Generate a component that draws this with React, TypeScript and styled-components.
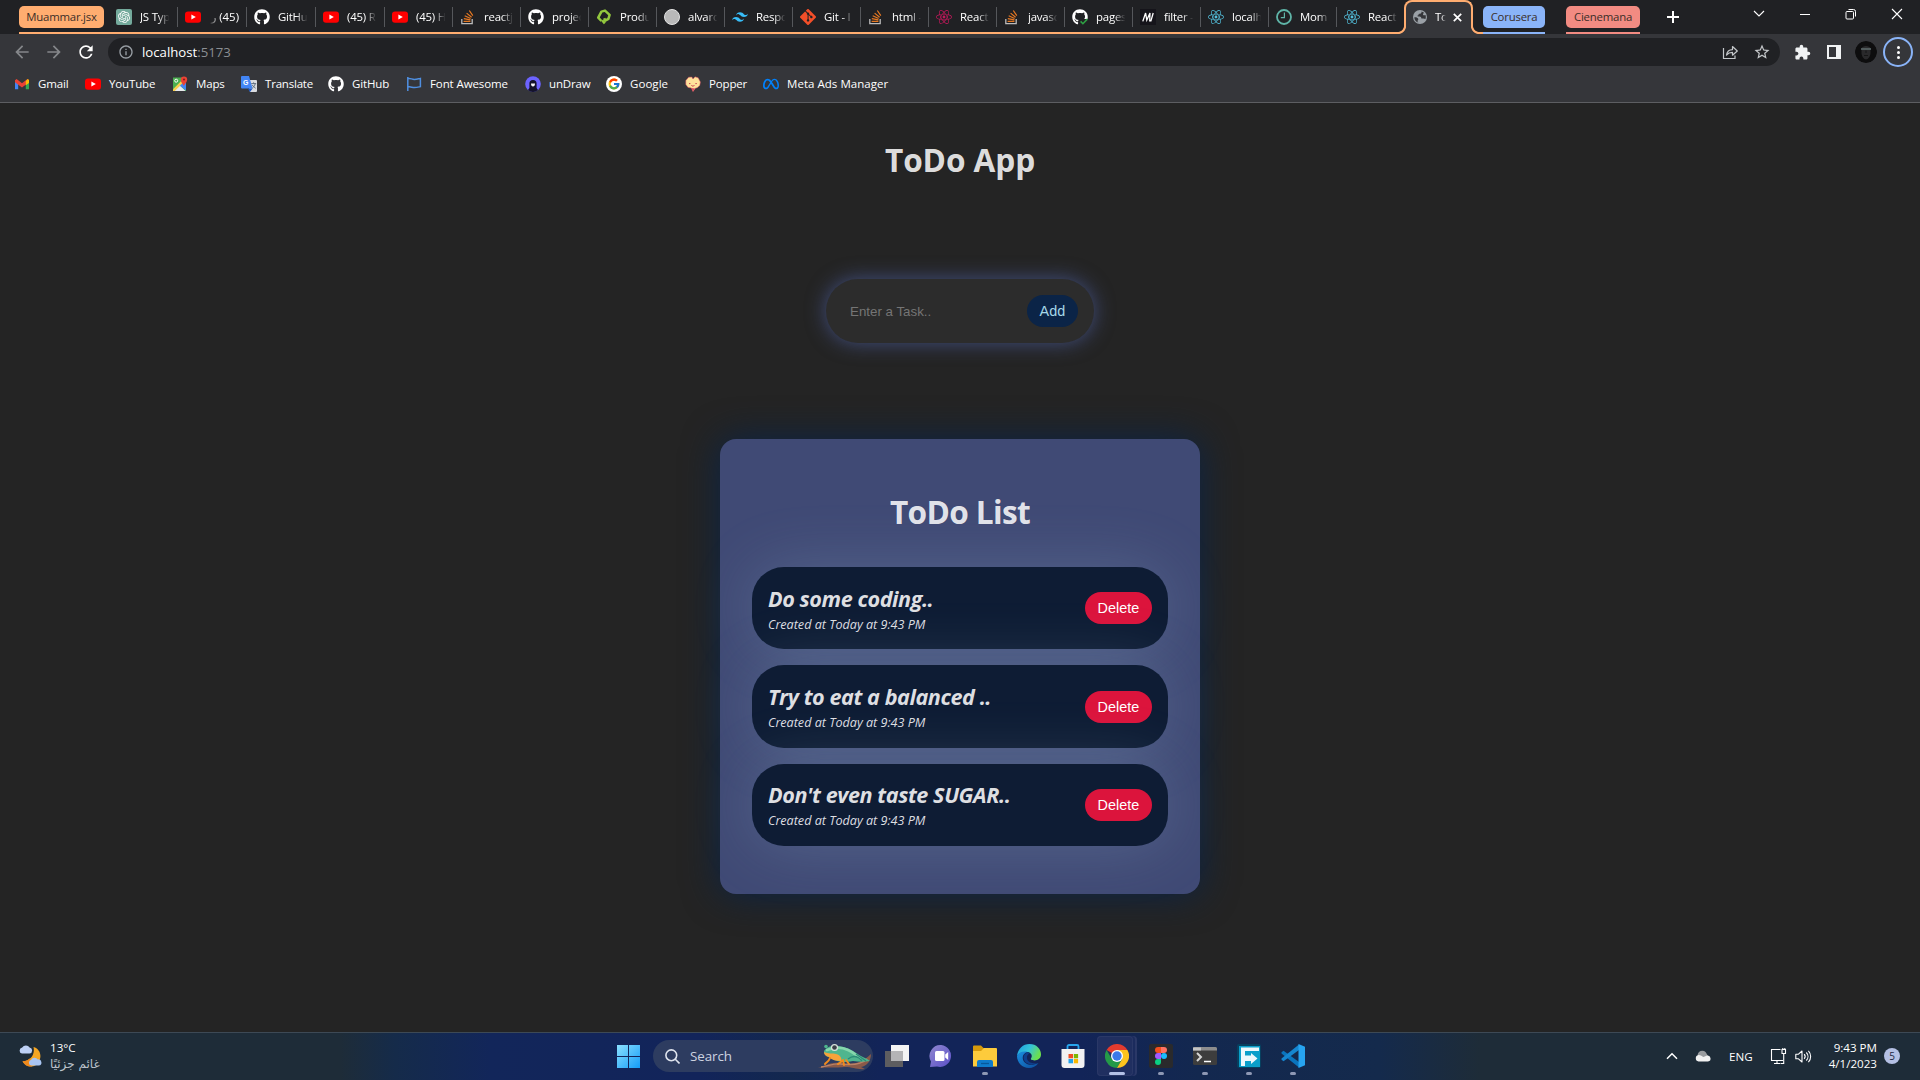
import React from 'react';
import styled, { createGlobalStyle, css } from 'styled-components';
import { FaGithub, FaReact } from 'react-icons/fa';
import { SiOpenai, SiTailwindcss, SiGit, SiMeta } from 'react-icons/si';
import { FcGoogle } from 'react-icons/fc';
import {
  MdArrowBack,
  MdArrowForward,
  MdRefresh,
  MdExtension,
  MdStarBorder,
  MdOutlineInfo,
} from 'react-icons/md';

const ui = `'Segoe UI', 'Open Sans', 'Noto Sans', sans-serif`;
const arial = `'Liberation Sans', Arial, sans-serif`;

const GlobalStyle = createGlobalStyle`
  *, *::before, *::after { box-sizing: border-box; }
  body { margin: 0; background: #242424; font-family: ${ui}; overflow: hidden; }
  svg { display: block; flex: none; }
`;

const Screen = styled.div`
  width: 1920px;
  height: 1080px;
  display: flex;
  flex-direction: column;
  background: #242424;
`;

/* ---------- tab strip ---------- */

const TabStrip = styled.div`
  height: 34px;
  display: flex;
  background: #202124;
  padding-left: 19px;
`;

const GroupedTabs = styled.div`
  display: flex;
  height: 34px;
  width: 1379px;
  border-bottom: 2px solid #ffad70;
`;

const Chip = styled.div<{ $w: number; $bg: string }>`
  width: ${(p) => p.$w}px;
  height: 22px;
  margin-top: 6px;
  flex: none;
  border-radius: 5px;
  background: ${(p) => p.$bg};
  color: #3a2e28;
  font-size: 11.4px;
  letter-spacing: -0.22px;
  line-height: 21px;
  text-align: center;
  white-space: nowrap;
`;

const ChipGroup = styled.div<{ $line: string; $gap: number }>`
  height: 34px;
  margin-right: ${(p) => p.$gap}px;
  border-bottom: 2px solid ${(p) => p.$line};
`;

const TabList = styled.div`
  display: flex;
  margin-left: 5px;
  height: 32px;
`;

const TabBox = styled.div<{ $w: number; $last?: boolean }>`
  width: ${(p) => p.$w}px;
  flex: none;
  height: 20px;
  margin-top: 7px;
  padding-left: 7px;
  display: flex;
  align-items: center;
  gap: 8px;
  border-right: 1px solid ${(p) => (p.$last ? 'transparent' : '#55575b')};
`;

const IconSlot = styled.span`
  width: 16px;
  height: 16px;
  flex: none;
  display: flex;
  align-items: center;
  justify-content: center;
`;

const TabLabel = styled.span<{ $w?: number; $rtl?: boolean }>`
  width: ${(p) => p.$w ?? 30}px;
  flex: none;
  overflow: hidden;
  white-space: nowrap;
  color: #fff;
  font-size: 11.4px;
  line-height: 18px;
  letter-spacing: -0.2px;
  ${(p) =>
    p.$rtl
      ? css`
          direction: rtl;
          mask-image: linear-gradient(to left, #000 65%, transparent);
        `
      : css`
          mask-image: linear-gradient(to right, #000 60%, transparent 98%);
        `}
`;

const ActiveTab = styled.div`
  position: relative;
  width: 69px;
  height: 34px;
  margin-left: 6px;
  flex: none;
  display: flex;
  align-items: center;
  gap: 7px;
  padding-left: 8px;
  background: #35363a;
  border-radius: 8px 8px 0 0;

  &::before {
    content: '';
    position: absolute;
    inset: 0 0 8px 0;
    border: 2px solid #ffad70;
    border-bottom: 0;
    border-radius: 8px 8px 0 0;
  }
`;

const Flare = styled.span<{ $side: 'left' | 'right' }>`
  position: absolute;
  bottom: 0;
  width: 8px;
  height: 8px;
  ${(p) =>
    p.$side === 'left'
      ? css`
          left: -6px;
          background: radial-gradient(circle at 0 0, #202124 5.5px, #ffad70 6.2px 7.6px, #35363a 8.4px);
        `
      : css`
          right: -6px;
          background: radial-gradient(circle at 100% 0, #202124 5.5px, #ffad70 6.2px 7.6px, #35363a 8.4px);
        `}
`;

const GroupTail = styled.div`
  width: 4px;
  margin-left: 6px;
  height: 34px;
  border-bottom: 2px solid #ffad70;
`;

const WindowButtons = styled.div`
  display: flex;
  margin-left: auto;
  padding-right: 12px;
  align-items: center;
  height: 28px;
  gap: 24px;
`;

const NewTab = styled.div`
  display: flex;
  align-items: center;
  height: 34px;
  margin-left: 5px;
`;

/* ---------- toolbar ---------- */

const Toolbar = styled.div`
  height: 36px;
  display: flex;
  align-items: center;
  background: #35363a;
  padding: 0 6px 0 12px;
`;

const NavButtons = styled.div`
  display: flex;
  gap: 12px;
  width: 96px;
  color: #85878a;
`;

const Omnibox = styled.div`
  width: 1672px;
  height: 28px;
  flex: none;
  display: flex;
  align-items: center;
  border-radius: 14px;
  background: #202124;
  padding: 0 9px 0 10px;
  color: #9aa0a6;
`;

const Url = styled.span`
  margin-left: 8px;
  flex: 1;
  font-size: 13.2px;
  line-height: 20px;
  color: #8b8f93;

  b {
    font-weight: 400;
    color: #fff;
  }
`;

const OmniActions = styled.span`
  display: flex;
  align-items: center;
  gap: 15px;
  color: #c4c7ca;
`;

const ToolbarActions = styled.div`
  display: flex;
  align-items: center;
  padding-left: 14px;
  color: #f1f3f4;
`;

const SidePanelGlyph = styled.span`
  width: 14px;
  height: 14px;
  margin-left: 16px;
  border: 2px solid #f1f3f4;
  border-right-width: 5px;
`;

const Avatar = styled.span`
  width: 22px;
  height: 22px;
  margin-left: 14px;
  border-radius: 50%;
  overflow: hidden;
`;

const MenuButton = styled.span`
  width: 30px;
  height: 30px;
  margin-left: 6px;
  border-radius: 50%;
  border: 2px solid #8ab4f8;
  display: flex;
  flex-direction: column;
  align-items: center;
  justify-content: center;
  gap: 2px;

  i {
    width: 3px;
    height: 3px;
    border-radius: 50%;
    background: #fff;
  }
`;

/* ---------- bookmarks ---------- */

const BookmarksBar = styled.div`
  height: 33px;
  display: flex;
  align-items: center;
  padding: 0 14px 5px;
  background: #35363a;
  border-bottom: 1px solid #5d5e62;
`;

const BookmarkItem = styled.div<{ $w: number; $ls?: number }>`
  width: ${(p) => p.$w}px;
  flex: none;
  display: flex;
  align-items: center;
  gap: 8px;
  color: #fff;
  font-size: 11.5px;
  line-height: 16px;
  letter-spacing: ${(p) => p.$ls ?? -0.15}px;
  white-space: nowrap;
`;

/* ---------- page ---------- */

const Page = styled.main`
  height: 929px;
  display: flex;
  flex-direction: column;
  align-items: center;
  background: #242424;
  color: rgba(255, 255, 255, 0.87);
`;

const Heading = styled.h1<{ $mt: number; $ls: number }>`
  margin: ${(p) => p.$mt}px 0 0;
  font-size: 31.6px;
  line-height: 44px;
  font-weight: 700;
  letter-spacing: ${(p) => p.$ls}px;
  text-align: center;
`;

const TaskForm = styled.form`
  width: 268px;
  height: 64px;
  margin-top: 97px;
  padding: 16px 16px 16px 24px;
  display: flex;
  align-items: center;
  justify-content: space-between;
  border-radius: 32px;
  background: #2c2c2c;
  box-shadow: 0 0 20px rgba(87, 108, 188, 0.6);
`;

const TaskInput = styled.input`
  width: 150px;
  padding: 0;
  border: 0;
  outline: 0;
  background: transparent;
  font: 13.333px ${arial};
  color: #ddd;

  &::placeholder {
    color: #757575;
  }
`;

const PillButton = styled.button<{ $bg: string; $fg: string }>`
  height: 32px;
  padding: 0 12.8px;
  flex: none;
  border: 0;
  border-radius: 16px;
  background: ${(p) => p.$bg};
  color: ${(p) => p.$fg};
  font: 14.4px ${arial};
`;

const Card = styled.section`
  width: 480px;
  height: 455px;
  margin-top: 96px;
  padding: 0 32px;
  border-radius: 16px;
  background: #404a75;
  box-shadow: 0 0 36px #0b2447;
`;

const TaskList = styled.ul`
  margin: 33px 0 0;
  padding: 0;
  list-style: none;
  display: flex;
  flex-direction: column;
  gap: 16px;
`;

const TaskItem = styled.li`
  height: 82.4px;
  padding: 2px 16px 0;
  display: flex;
  align-items: center;
  justify-content: space-between;
  border-radius: 32px;
  background: #0e1c34;
  box-shadow: 0 0 64px rgba(165, 205, 232, 0.2);

  button {
    margin-top: -2px;
  }
`;

const TaskTitle = styled.h2`
  margin: 0;
  font-size: 21.6px;
  line-height: 28px;
  font-weight: 700;
  font-style: italic;
  letter-spacing: -0.43px;
  color: #dedfe2;
  white-space: nowrap;
`;

const TaskMeta = styled.p`
  margin: 2px 0 0;
  font-size: 12.6px;
  line-height: 19px;
  font-style: italic;
  letter-spacing: -0.01px;
  color: #dedfe2;
  white-space: nowrap;
`;

/* ---------- taskbar ---------- */

const Taskbar = styled.footer`
  height: 48px;
  display: flex;
  align-items: center;
  border-top: 1px solid #3d4955;
  padding-bottom: 1px;
  background: linear-gradient(
    to right,
    #1e2c38 0,
    #1e2c38 340px,
    #152b4a 395px,
    #12265a 490px,
    #12245a 700px,
    #13284e 790px,
    #122458 880px,
    #122458 1080px,
    #13284f 1200px,
    #142a4c 1380px,
    #1e2c38 1480px
  );
`;

const Weather = styled.div`
  width: 598px;
  display: flex;
  align-items: center;
  gap: 8px;
  padding-left: 18px;
  color: #fff;
  font-size: 11.6px;
  line-height: 16px;
`;

const WeatherNote = styled.small`
  display: block;
  width: 46px;
  font: 12px/16px 'DejaVu Sans', sans-serif;
  color: #bcc3ca;
  white-space: nowrap;
`;

const StartButton = styled.div`
  width: 55px;
  padding-left: 19px;
`;

const SearchBox = styled.div`
  width: 220px;
  height: 32px;
  flex: none;
  display: flex;
  align-items: center;
  padding-left: 12px;
  border-radius: 16px;
  background: #2d3c60;
  color: #cdd3e0;
  font-size: 13.4px;
  letter-spacing: -0.1px;

  span {
    margin-left: 10px;
    flex: 1;
  }
`;

const AppSlots = styled.div`
  display: flex;
  margin-left: 2px;
`;

const AppSlot = styled.div<{ $active?: boolean }>`
  width: 40px;
  height: 40px;
  margin: 0 2px;
  display: flex;
  flex-direction: column;
  align-items: center;
  padding-top: 8px;
  border-radius: 4px;
  ${(p) =>
    p.$active &&
    css`
      width: 36px;
      margin: 0 6px 0 2px;
      padding-left: 4px;
      background: #202f60;
      box-shadow: inset 0 0 0 1px #2a3867, 2px 0 0 #1b2b5d, 4px 0 0 #2a3867;
    `}
`;

const RunMark = styled.i<{ $wide?: boolean }>`
  width: ${(p) => (p.$wide ? 16 : 6)}px;
  height: 3px;
  margin-top: 4px;
  border-radius: 2px;
  background: ${(p) => (p.$wide ? '#b3c1e6' : '#8e98b4')};
`;

const Tray = styled.div`
  display: flex;
  align-items: center;
  margin-left: auto;
  padding-right: 20px;
  color: #fff;
  font-size: 11.6px;
`;

const Clock = styled.div`
  width: 64px;
  margin-left: 1px;
  line-height: 16px;
  text-align: right;
  white-space: nowrap;
`;

const Badge = styled.span`
  width: 16px;
  height: 16px;
  margin-left: 7px;
  border-radius: 50%;
  background: #b4c0e4;
  color: #1c2540;
  font-size: 10px;
  line-height: 16px;
  text-align: center;
`;

const CloudSlot = styled.span`
  margin-left: 17px;
`;

const Lang = styled.span`
  width: 23px;
  margin: 0 18px;
`;

const SpeakerSlot = styled.span`
  margin-left: 8px;
`;

/* ---------- drawings ---------- */

const YouTube = () => (
  <svg width="16" height="16" viewBox="0 0 16 16">
    <rect y="2.4" width="16" height="11.4" rx="3" fill="#f00" />
    <path d="M6.4 5.6v5L10.8 8z" fill="#fff" />
  </svg>
);

const ChatGpt = () => (
  <svg width="16" height="16" viewBox="0 0 16 16">
    <rect width="16" height="16" rx="2" fill="#74aa9c" />
    <SiOpenai x="2" y="2" size={12} color="#fff" />
  </svg>
);

const StackOverflow = () => (
  <svg width="16" height="16" viewBox="0 0 16 16" fill="none">
    <path d="M1.800 10v4.600h10.400V10" stroke="#bcbbbb" strokeWidth="1.300" />
    <path
      d="M3.600 12.300h6.800M3.800 9.600l6.600 1.200M4.700 6.800l5.900 2.700M6.600 4.100l5 4.100M9.300 1.500l3.500 5.200"
      stroke="#e87922"
      strokeWidth="1.200"
    />
  </svg>
);

const GreenQ = () => (
  <svg width="16" height="16" viewBox="0 0 16 16" fill="none" stroke="#93c83e" strokeWidth="2.500" strokeLinejoin="round">
    <path d="M5.400 12 2.200 8.600 5.400 2.600 9 1.600l4.600 4.200-1.200 4-3.200 1.800-1-2.400" />
    <path d="m6.200 11.200 2.600 3.200" />
  </svg>
);

const GrayBall = () => (
  <svg width="16" height="16" viewBox="0 0 16 16">
    <circle cx="8" cy="8" r="7.500" fill="#b9b9b9" stroke="#e3e3e3" strokeWidth="1" />
  </svg>
);

const GithubCheck = () => (
  <svg width="16" height="16" viewBox="0 0 16 16">
    <FaGithub size={16} color="#fff" />
    <path d="M7 10h9v6H7z" fill="#202124" />
    <path d="m8.600 12.400 2.300 2.300 4.400-4.600" fill="none" stroke="#2ea043" strokeWidth="1.600" />
  </svg>
);

const MdnMark = () => (
  <svg width="16" height="16" viewBox="0 0 16 16">
    <rect width="16" height="16" fill="#15141a" />
    <path d="M2.800 12.400 5.600 4l1.200 7L10 4l-.3 8.400M10.800 12.400 13.200 4" fill="none" stroke="#fff" strokeWidth="1.300" />
  </svg>
);

const ClockMark = () => (
  <svg width="16" height="16" viewBox="0 0 16 16" fill="none" stroke="#5fb5a8">
    <circle cx="8" cy="8" r="7" strokeWidth="1.800" />
    <path d="M8.400 3.600v5H4.800" strokeWidth="1.200" />
  </svg>
);

const Globe = () => (
  <svg width="16" height="16" viewBox="0 0 16 16">
    <circle cx="8" cy="8" r="7" fill="#9aa0a6" />
    <path
      d="M9.500 2.400C10 4 8.500 4.600 7.200 4.800c-.8.200-.4 1.400-1.400 1.800-.8.200-.6.900.4.900 1.800 0 3 .1 3 1.300 0 1 1.200.8 2.200.8.800 0 1.400.500 2 .400.600-1.400.500-2.800.1-4-.8.500-2.300.400-2.500-.6 0-.8.800-1 .9-1.800zM2.300 8.400c1.700-.3 3.600.4 4 1.500.1 1-.9 1.300-.8 2.300 0 .5.700.8 1.100 1.400C4 13 2.400 11 2.300 8.400z"
      fill="#35363a"
    />
  </svg>
);

const Gmail = () => (
  <svg width="16" height="16" viewBox="0 0 16 16">
    <path d="M1 4v9.200h3.200V6z" fill="#4285f4" />
    <path d="M15 4v9.200h-3.200V6z" fill="#34a853" />
    <path d="M1 4.200 2.600 3 8 7.200 13.400 3 15 4.200v2L8 11.400 1 6.200z" fill="#ea4335" />
    <path d="M11.800 5 13.800 3 15 4v3l-3.200 2.200z" fill="#fbbc04" />
  </svg>
);

const Maps = () => (
  <svg width="16" height="16" viewBox="0 0 16 16">
    <path d="M1 1.500h13V15H1z" fill="#4caf50" />
    <path d="m2 15 6-5.600L13.500 15z" fill="#e8eaed" />
    <path d="m7.600 9.600 5-5L14 6v8.500z" fill="#4285f4" />
    <path d="m1 13.200 8-8 1.600 1.800L2.800 15H1z" fill="#fbd04c" />
    <circle cx="4.200" cy="4.700" r="1.500" fill="none" stroke="#fff" />
    <path d="M11.800 9.800C10 7 8.800 6 8.800 3.600a3.200 3.200 0 0 1 6.400 0C15.200 6 13.600 7 11.800 9.800z" fill="#ea4335" />
    <circle cx="12" cy="3.500" r="1.100" fill="#8c1d18" />
  </svg>
);

const GlyphText = styled.text`
  font-family: ${arial};
  font-weight: 700;
`;

const Translate = () => (
  <svg width="16" height="16" viewBox="0 0 16 16">
    <path d="M6 4h9a1 1 0 0 1 1 1v10a1 1 0 0 1-1 1H9z" fill="#dadce0" />
    <path d="M1 0h7l3.600 12.500H1a1 1 0 0 1-1-1V1a1 1 0 0 1 1-1z" fill="#4285f4" />
    <path d="M6.800 12.500h4.800L9 16z" fill="#1a56c4" />
    <path
      d="M10.200 7.600h5M12.600 6.400v1.200M14.200 7.800c-.4 2-1.600 3.400-2.800 4.200M11.400 9c.8 1.600 2 2.600 3.200 3.200"
      stroke="#5f6f80"
      fill="none"
    />
    <GlyphText x="2" y="8.800" fontSize="7" fill="#fff">G</GlyphText>
  </svg>
);

const FlagMark = () => (
  <svg width="16" height="16" viewBox="0 0 16 16" fill="none" stroke="#4f8fe0" strokeWidth="1.500">
    <path d="M1.800 1v14M1.800 2.600c2.500-.6 4 .8 6.500.8s3.700-.5 6.100-1v8.200c-2.400.6-3.400 1-5.900 1s-4.200-1.400-6.700-.6" />
  </svg>
);

const UnDraw = () => (
  <svg width="16" height="16" viewBox="0 0 16 16">
    <circle cx="8" cy="8" r="7.800" fill="#6c63ff" />
    <path d="M4.400 12V7.600a3.600 3.600 0 0 1 7.200 0V12l1.400 2a8 8 0 0 1-10 0z" fill="#14132b" />
    <path d="M6 7.400h4c0 1.800-.7 3-2 3s-2-1.200-2-3z" fill="#f4f4f8" />
  </svg>
);

const GoogleBadge = () => (
  <svg width="16" height="16" viewBox="0 0 16 16">
    <circle cx="8" cy="8" r="8" fill="#fff" />
    <FcGoogle x="1.500" y="1.500" size={13} />
  </svg>
);

const Popper = () => (
  <svg width="16" height="16" viewBox="0 0 16 16">
    <path
      d="M.8 4.600 3.600 1.200 6.800 1l1.200 2L10 .8l3.200 1L15.400 6l-.6 3.400-2.600 2.400-1.800.4L8 15.600 6.400 12 3 11.400.800 8.400z"
      fill="#ffe29a"
      stroke="#d8485f"
      strokeWidth=".5"
    />
    <path d="m6.200 12 1.800 3.600 2-3.200z" fill="#d8485f" />
    <path d="M4 7.600h1.400M10.400 7.600h1.400M6.400 9.200c.8 1.300 2.200 1.300 3 0" stroke="#c83b50" fill="none" />
  </svg>
);

const MoonCloud = () => (
  <svg width="24" height="24" viewBox="0 0 24 24">
    <path d="M15.500 3C22 5 24.500 11.500 20.500 18.500 17 23.800 8.500 24 4.500 17.200 11 18 17.500 11.500 15.500 3z" fill="#f5a623" />
    <path d="M4.500 17.200C7 22 11 23 14 22.400l1-5-3.500-2.800c-2 1.900-4.500 2.800-7 2.600z" fill="#ef8a1d" />
    <path d="M4 9.500a3 3 0 0 1 .2-5.900 4.400 4.400 0 0 1 7.400-.2 3.100 3.100 0 0 1 0 6.100z" fill="#bdd0f5" />
    <path d="M13 21.600a3 3 0 0 1 .2-5.800 4 4 0 0 1 6.600-.4 3.100 3.100 0 0 1 1 6.200z" fill="#a9c5f2" />
  </svg>
);

const WindowsLogo = () => (
  <svg width="23" height="23" viewBox="0 0 23 23">
    <defs>
      <linearGradient id="win" x1="0" y1="0" x2="1" y2="1">
        <stop offset="0" stopColor="#8ae0ff" />
        <stop offset="1" stopColor="#149cf8" />
      </linearGradient>
    </defs>
    <path d="M0 0h11v11H0zM12 0h11v11H12zM0 12h11v11H0zM12 12h11v11H12z" fill="url(#win)" />
  </svg>
);

const Frog = () => (
  <svg width="55" height="28" viewBox="0 0 55 28">
    <path d="M0 26c6-1 11-6 21-5 12 2 22 1 32-9 0 7-4 12-10 13l4 2c-8 1-12-2-20-2-9 1-18 0-27 1z" fill="#8a5a49" />
    <path d="M3 25c8-1 12-4 20-3s20 1 26-5" stroke="#b98267" strokeWidth="1.400" fill="none" />
    <path d="M6 9c2-3 5-5 9-5 7 0 14 1 20 5 5 3 9 6 14 8l3 2c-6 1-11 1-17 0-8 2-17 1-22-3-4-1-7-3-7-7z" fill="#4fb58e" />
    <path d="M9 8c7-3 15-3 21 0 5 2 8 5 12 8" stroke="#86d7ac" strokeWidth="2.600" fill="none" strokeLinecap="round" />
    <path d="M6 10c4 2 9 1 12 2 5 1 6 5 5 7-5 0-9-1-12-4-3-1-5-2-5-5z" fill="#f6a33a" />
    <path d="M12 16c-1 3-3 4-5 6M25 18c-2 2-3 3-5 4M25 18l1 5M28 18l3 4" stroke="#f28b1d" strokeWidth="2" fill="none" strokeLinecap="round" />
    <path d="M30 17c4-3 9-4 14 2M38 12l10 7" stroke="#2b8c77" strokeWidth="1.400" fill="none" />
    <circle cx="16.500" cy="5.500" r="3.600" fill="#d7e4dc" />
    <circle cx="16.500" cy="5.500" r="2.300" fill="#3a4048" />
    <circle cx="8" cy="4.500" r="1.800" fill="#4fb58e" />
  </svg>
);

const TaskView = () => (
  <svg width="24" height="24" viewBox="0 0 24 24">
    <rect x="6" y="1" width="18" height="16" fill="#f4f4f4" />
    <rect x="0" y="7" width="18" height="16" fill="#5d5d60" />
    <rect x="6" y="7" width="12" height="10" fill="#b4b4b6" />
  </svg>
);

const ChatIcon = () => (
  <svg width="24" height="24" viewBox="0 0 24 24">
    <defs>
      <linearGradient id="chat" x1="0" y1="0" x2="1" y2="1">
        <stop offset="0" stopColor="#8f87cf" />
        <stop offset="1" stopColor="#5b50c8" />
      </linearGradient>
    </defs>
    <path d="M12.300 1A11 11 0 1 1 8 22.500L1 23l1-5.500A11 11 0 0 1 12.300 1z" fill="url(#chat)" />
    <rect x="6" y="7" width="9.500" height="10" rx="1.500" fill="#fff" />
    <path d="m16.200 10.500 3-2.500v8l-3-2.500z" fill="#fff" />
  </svg>
);

const Explorer = () => (
  <svg width="24" height="24" viewBox="0 0 24 24">
    <path d="M0 2.500a1 1 0 0 1 1-1h7l2.500 2.500H13v5H0z" fill="#d69a0c" />
    <path d="M0 7h8l3-3h12a1 1 0 0 1 1 1v17.500H0z" fill="#fdcb3c" />
    <path d="M4 23v-5a2 2 0 0 1 2-2h12a2 2 0 0 1 2 2v5z" fill="#0f7bcb" />
    <path d="M8 19.500h8" stroke="#07589a" strokeWidth="1.300" />
  </svg>
);

const Edge = () => (
  <svg width="24" height="24" viewBox="0 0 24 24">
    <defs>
      <linearGradient id="edgeTop" x1="0" y1="0" x2="1" y2=".4">
        <stop offset="0" stopColor="#1b9de2" />
        <stop offset=".55" stopColor="#35c3d8" />
        <stop offset="1" stopColor="#6be04f" />
      </linearGradient>
      <linearGradient id="edgeLow" x1="0" y1="0" x2="1" y2="1">
        <stop offset="0" stopColor="#1a8fe0" />
        <stop offset="1" stopColor="#0d4d9c" />
      </linearGradient>
    </defs>
    <path d="M0 12C1 4.500 6 0 12.500 0 19.500 0 24 5 24 10.300c0 4-3 6.200-6.500 6.200-2.800 0-4.300-1-3.300-2.400 1.300-1.900.6-5.600-3.600-6.100C5.500 7.400 1.500 9 0 12z" fill="url(#edgeTop)" />
    <path d="M0 12c1.500-3.500 6-5.300 10.600-4-3.800 1-5.500 4-4.600 7.500 1.400 4.800 7.500 7.200 15.500 3.600C19 22.600 15.600 24 12 24 5.200 24 0 18.500 0 12z" fill="url(#edgeLow)" />
    <path d="M10.600 8.200C7.500 9.500 6 12.300 7 15.800c1.300 4.200 7 6 14.500 3.300-5 1.200-10.600-.3-11.500-4.500-.5-2.400.7-4 2.600-5-.5-.7-1.200-1.200-2-1.400z" fill="#0f3f8c" />
  </svg>
);

const Store = () => (
  <svg width="24" height="24" viewBox="0 0 24 24">
    <path d="M6.500 6V2.500A1.500 1.500 0 0 1 8 1h8a1.500 1.500 0 0 1 1.500 1.500V6" fill="none" stroke="#27a5ec" strokeWidth="1.800" />
    <path d="M.500 5h23v16a3 3 0 0 1-3 3h-17a3 3 0 0 1-3-3z" fill="#f2f2f2" />
    <path d="M7.500 10H12v4.300H7.500z" fill="#f04e23" />
    <path d="M12.800 10h4.300v4.300h-4.300z" fill="#7db700" />
    <path d="M7.500 15H12v4.300H7.500z" fill="#20a3ec" />
    <path d="M12.800 15h4.300v4.300h-4.300z" fill="#fbb800" />
  </svg>
);

const Chrome = () => (
  <svg width="24" height="24" viewBox="0 0 24 24">
    <path d="M12 12 1.600 6A12 12 0 0 1 22.400 6z" fill="#e33b2e" />
    <path d="M12 12 6.800 15 1.600 6A12 12 0 0 0 12 24l5.200-9z" fill="#249a48" />
    <path d="M17.200 15 12 24a12 12 0 0 0 10.400-18H12z" fill="#fcc31e" />
    <circle cx="12" cy="12" r="6" fill="#fff" />
    <circle cx="12" cy="12" r="4.700" fill="#3b79ea" />
  </svg>
);

const Figma = () => (
  <svg width="24" height="24" viewBox="0 0 24 24">
    <rect width="24" height="24" rx="2" fill="#2a2a2c" />
    <path d="M12 3H9a3 3 0 0 0 0 6h3z" fill="#f24e1e" />
    <path d="M12 3h3a3 3 0 0 1 0 6h-3z" fill="#ff7262" />
    <path d="M12 9H9a3 3 0 0 0 0 6h3z" fill="#a259ff" />
    <circle cx="15" cy="12" r="3" fill="#1abcfe" />
    <path d="M12 15H9a3 3 0 1 0 3 3z" fill="#0acf83" />
  </svg>
);

const Terminal = () => (
  <svg width="24" height="24" viewBox="0 0 24 24">
    <rect y="3" width="24" height="18" rx="1.500" fill="#3d3d3d" />
    <path d="M0 6.500V4.500A1.500 1.500 0 0 1 1.500 3h21A1.500 1.500 0 0 1 24 4.500v2z" fill="#8d8d8d" />
    <path d="M0 3.500h8v3H0z" fill="#c4c4c4" />
    <path d="m4 9 4 4-4 4" fill="none" stroke="#d6d6d6" strokeWidth="2" />
    <path d="M11 17.500h7" stroke="#fff" strokeWidth="1.500" />
  </svg>
);

const FArrow = () => (
  <svg width="24" height="24" viewBox="0 0 24 24">
    <rect width="24" height="24" rx="2" fill="#07405f" />
    <rect x="2" y="2" width="21" height="21" fill="#0b9fca" />
    <path d="M4 22V3.500h18V7H8v4.500h6V9l6.500 5.500-6.500 5.500v-3H8v5z" fill="#eef8fc" />
  </svg>
);

const VsCode = () => (
  <svg width="24" height="24" viewBox="0 0 24 24">
    <path d="M.500 8.300 2.500 6.800 18 18v5.400L.500 9.600z" fill="#0a74bd" />
    <path d="M.500 15.700 2.500 17.200 18 6V.600L.500 14.400z" fill="#1586d0" />
    <path d="M17.500 0 24 2.800v18.400L17.500 24z" fill="#27a4f0" />
  </svg>
);

const FaceAvatar = () => (
  <svg width="22" height="22" viewBox="0 0 22 22">
    <circle cx="11" cy="11" r="11" fill="#0d0d0e" />
    <path d="M6.500 7.500C7 4 15 4 15.500 7.500V12c0 3-2.500 6.500-4.500 6.500S6.500 15 6.500 12z" fill="#29292b" />
    <path d="M6 8h10" stroke="#5f6d6e" strokeWidth="1.400" />
    <path d="M9 14.500h4M11 9.500V12" stroke="#151516" />
  </svg>
);

const ShareIcon = () => (
  <svg width="16" height="16" viewBox="0 0 16 16" fill="none" stroke="currentColor" strokeWidth="1.200">
    <path d="M1.500 4v10.500h11.500V11.500" />
    <path d="M4.500 11C5 7.500 7 5.700 10.500 5.600V2.500L15.300 7l-4.800 4.200V8.400C7.800 8.400 6 9.200 4.500 11z" strokeLinejoin="round" />
  </svg>
);

const CloudIcon = () => (
  <svg width="16" height="12" viewBox="0 0 16 12">
    <path d="M3 7a4.500 4.500 0 0 1 8.500-3.500L14 8H3z" fill="#9a9da0" />
    <path d="M3.500 11.500a3.300 3.300 0 0 1 0-6.500C6 5 7 6.500 8.500 7L12 5.500a3 3 0 0 1 1 6z" fill="#f2f2f2" />
  </svg>
);

const NetworkIcon = () => (
  <svg width="17" height="17" viewBox="0 0 17 17" fill="none" stroke="#fff" strokeWidth="1.100">
    <path d="M10.500 1.500h-9v11h11.500M7 12.500v3M4 15.500h6.500" />
    <path d="M12 1.500h3.500v4H12zM13.700 5.500v10H11M12.800 0v1.500M14.800 0v1.500" />
  </svg>
);

const SpeakerIcon = () => (
  <svg width="17" height="15" viewBox="0 0 17 15" fill="none" stroke="#fff" strokeWidth="1.100" strokeLinejoin="round">
    <path d="M.800 5.200h2.700L7 2v11L3.500 9.800H.800z" />
    <path d="M9.200 5.200c1.200 1.400 1.200 3.200 0 4.600M11.300 3.500c2.200 2.300 2.200 5.700 0 8M13.400 1.800c3 3.200 3 8.200 0 11.400" />
  </svg>
);

/* ---------- data ---------- */

type TabInfo = { icon: React.ReactNode; label: string; w?: number; rtl?: boolean };

const tabs: TabInfo[] = [
  { icon: <ChatGpt />, label: 'JS Typ', w: 69 },
  { icon: <YouTube />, label: '(45) ر', w: 69, rtl: true },
  { icon: <FaGithub size={16} color="#fff" />, label: 'GitHub', w: 69 },
  { icon: <YouTube />, label: '(45) R', w: 69 },
  { icon: <YouTube />, label: '(45) H' },
  { icon: <StackOverflow />, label: 'reactjs' },
  { icon: <FaGithub size={16} color="#fff" />, label: 'project' },
  { icon: <GreenQ />, label: 'Produ' },
  { icon: <GrayBall />, label: 'alvaro' },
  { icon: <SiTailwindcss size={16} color="#38bdf8" />, label: 'Respo' },
  { icon: <SiGit size={16} color="#f34f29" />, label: 'Git - I' },
  { icon: <StackOverflow />, label: 'html -' },
  { icon: <FaReact size={16} color="#c2185b" />, label: 'React' },
  { icon: <StackOverflow />, label: 'javasc' },
  { icon: <GithubCheck />, label: 'pages' },
  { icon: <MdnMark />, label: 'filter -' },
  { icon: <FaReact size={16} color="#53c1de" />, label: 'localh' },
  { icon: <ClockMark />, label: 'Mom' },
  { icon: <FaReact size={16} color="#53c1de" />, label: 'React' },
];

const bookmarks: { icon: React.ReactNode; label: string; w: number; ls?: number }[] = [
  { icon: <Gmail />, label: 'Gmail', w: 71 },
  { icon: <YouTube />, label: 'YouTube', w: 87 },
  { icon: <Maps />, label: 'Maps', w: 69 },
  { icon: <Translate />, label: 'Translate', w: 87, ls: -0.2 },
  { icon: <FaGithub size={16} color="#fff" />, label: 'GitHub', w: 78 },
  { icon: <FlagMark />, label: 'Font Awesome', w: 119, ls: -0.1 },
  { icon: <UnDraw />, label: 'unDraw', w: 81 },
  { icon: <GoogleBadge />, label: 'Google', w: 79, ls: 0.05 },
  { icon: <Popper />, label: 'Popper', w: 78 },
  { icon: <SiMeta size={16} color="#0081fb" />, label: 'Meta Ads Manager', w: 140, ls: 0.04 },
];

const tasks = ['Do some coding..', 'Try to eat a balanced ..', "Don't even taste SUGAR.."];

const apps: { icon: React.ReactNode; run?: boolean; active?: boolean }[] = [
  { icon: <TaskView /> },
  { icon: <ChatIcon /> },
  { icon: <Explorer />, run: true },
  { icon: <Edge /> },
  { icon: <Store /> },
  { icon: <Chrome />, run: true, active: true },
  { icon: <Figma />, run: true },
  { icon: <Terminal />, run: true },
  { icon: <FArrow />, run: true },
  { icon: <VsCode />, run: true },
];

export default function App() {
  return (
    <Screen>
      <GlobalStyle />
      <TabStrip>
        <GroupedTabs>
          <Chip $w={85} $bg="#ffad70">Muammar.jsx</Chip>
          <TabList>
            {tabs.map((t, i) => (
              <TabBox key={i} $w={t.w ?? 68} $last={i === tabs.length - 1}>
                <IconSlot>{t.icon}</IconSlot>
                <TabLabel $rtl={t.rtl}>{t.label}</TabLabel>
              </TabBox>
            ))}
          </TabList>
        </GroupedTabs>
        <ActiveTab>
          <Flare $side="left" />
          <Flare $side="right" />
          <IconSlot><Globe /></IconSlot>
          <TabLabel $w={11}>To</TabLabel>
          <svg width="9" height="9" viewBox="0 0 9 9" stroke="#fff" strokeWidth="1.700">
            <path d="m.800.800 7.400 7.400M8.200.800.800 8.200" />
          </svg>
        </ActiveTab>
        <GroupTail />
        <ChipGroup $line="#8ab4f8" $gap={21}>
          <Chip $w={62} $bg="#8ab4f8">Corusera</Chip>
        </ChipGroup>
        <ChipGroup $line="#f28b82" $gap={22}>
          <Chip $w={74} $bg="#f28b82">Cienemana</Chip>
        </ChipGroup>
        <NewTab>
          <svg width="12" height="12" viewBox="0 0 12 12" stroke="#fff" strokeWidth="2">
            <path d="M6 0v12M0 6h12" />
          </svg>
        </NewTab>
        <WindowButtons>
          <svg width="22" height="12" viewBox="0 0 22 12" fill="none" stroke="#fff" strokeWidth="1.100">
            <path d="m6 3 5 5 5-5" />
          </svg>
          <svg width="22" height="12" viewBox="0 0 22 12" fill="none" stroke="#fff" strokeWidth="1">
            <path d="M6 6.500h10" />
          </svg>
          <svg width="22" height="12" viewBox="0 0 22 12" fill="none" stroke="#fff" strokeWidth="1">
            <rect x="6" y="3.500" width="7.500" height="7.500" rx="1" />
            <path d="M8.500 1.500h5a2 2 0 0 1 2 2v5" />
          </svg>
          <svg width="22" height="12" viewBox="0 0 22 12" fill="none" stroke="#fff" strokeWidth="1.100">
            <path d="m6 1 10 10M16 1 6 11" />
          </svg>
        </WindowButtons>
      </TabStrip>

      <Toolbar>
        <NavButtons>
          <MdArrowBack size={20} />
          <MdArrowForward size={20} />
          <MdRefresh size={20} color="#fff" />
        </NavButtons>
        <Omnibox>
          <MdOutlineInfo size={16} />
          <Url><b>localhost</b>:5173</Url>
          <OmniActions>
            <ShareIcon />
            <MdStarBorder size={18} />
          </OmniActions>
        </Omnibox>
        <ToolbarActions>
          <MdExtension size={17} />
          <SidePanelGlyph />
          <Avatar><FaceAvatar /></Avatar>
          <MenuButton><i /><i /><i /></MenuButton>
        </ToolbarActions>
      </Toolbar>

      <BookmarksBar>
        {bookmarks.map((b) => (
          <BookmarkItem key={b.label} $w={b.w} $ls={b.ls}>
            <IconSlot>{b.icon}</IconSlot>
            {b.label}
          </BookmarkItem>
        ))}
      </BookmarksBar>

      <Page>
        <Heading $mt={35} $ls={-0.08}>ToDo App</Heading>
        <TaskForm>
          <TaskInput placeholder="Enter a Task.." />
          <PillButton type="button" $bg="#0b2447" $fg="#a5d7e8">Add</PillButton>
        </TaskForm>
        <Card>
          <Heading $mt={51} $ls={-0.65}>ToDo List</Heading>
          <TaskList>
            {tasks.map((title) => (
              <TaskItem key={title}>
                <div>
                  <TaskTitle>{title}</TaskTitle>
                  <TaskMeta>Created at Today at 9:43 PM</TaskMeta>
                </div>
                <PillButton $bg="#dc143c" $fg="#fff">Delete</PillButton>
              </TaskItem>
            ))}
          </TaskList>
        </Card>
      </Page>

      <Taskbar>
        <Weather>
          <MoonCloud />
          <div>
            13°C
            <WeatherNote>غائم جزئيًا</WeatherNote>
          </div>
        </Weather>
        <StartButton><WindowsLogo /></StartButton>
        <SearchBox>
          <svg width="15" height="15" viewBox="0 0 15 15" fill="none" stroke="#dfe4ee" strokeWidth="1.600">
            <circle cx="6.300" cy="6.300" r="5.400" />
            <path d="m10.300 10.300 4.200 4.200" />
          </svg>
          <span>Search</span>
          <Frog />
        </SearchBox>
        <AppSlots>
          {apps.map((a, i) => (
            <AppSlot key={i} $active={a.active}>
              {a.icon}
              {a.run && <RunMark $wide={a.active} />}
            </AppSlot>
          ))}
        </AppSlots>
        <Tray>
          <svg width="12" height="8" viewBox="0 0 12 8" fill="none" stroke="#fff" strokeWidth="1.500">
            <path d="m1 6.800 5-5 5 5" />
          </svg>
          <CloudSlot><CloudIcon /></CloudSlot>
          <Lang>ENG</Lang>
          <NetworkIcon />
          <SpeakerSlot><SpeakerIcon /></SpeakerSlot>
          <Clock>
            9:43 PM
            <br />
            4/1/2023
          </Clock>
          <Badge>5</Badge>
        </Tray>
      </Taskbar>
    </Screen>
  );
}
